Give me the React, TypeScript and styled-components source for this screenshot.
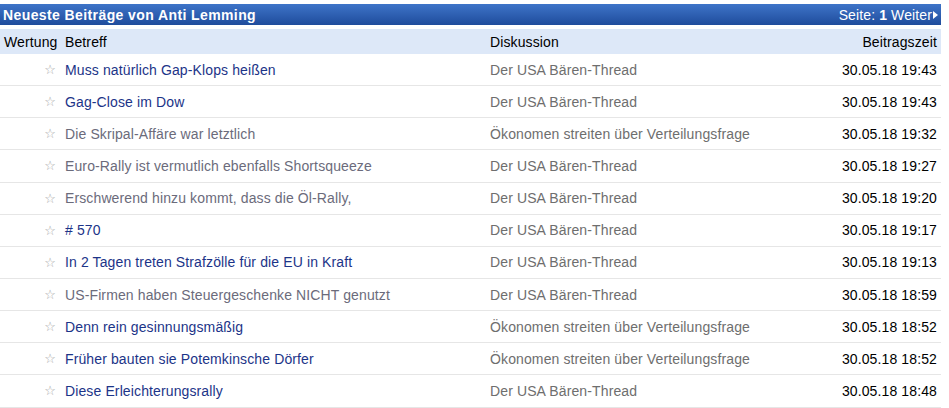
import * as React from 'react';
import styled, { createGlobalStyle } from 'styled-components';

const GlobalStyle = createGlobalStyle`
  body {
    margin: 0;
    background: #ffffff;
    font-family: Arial, "Liberation Sans", sans-serif;
  }
`;

interface Post {
  title: string;
  visited: boolean;
  thread: string;
  date: string;
}

const USA = 'Der USA Bären-Thread';
const OEK = 'Ökonomen streiten über Verteilungsfrage';

const posts: Post[] = [
  { title: 'Muss natürlich Gap-Klops heißen', visited: false, thread: USA, date: '30.05.18 19:43' },
  { title: 'Gag-Close im Dow', visited: false, thread: USA, date: '30.05.18 19:43' },
  { title: 'Die Skripal-Affäre war letztlich', visited: true, thread: OEK, date: '30.05.18 19:32' },
  { title: 'Euro-Rally ist vermutlich ebenfalls Shortsqueeze', visited: true, thread: USA, date: '30.05.18 19:27' },
  { title: 'Erschwerend hinzu kommt, dass die Öl-Rally,', visited: true, thread: USA, date: '30.05.18 19:20' },
  { title: '# 570', visited: false, thread: USA, date: '30.05.18 19:17' },
  { title: 'In 2 Tagen treten Strafzölle für die EU in Kraft', visited: false, thread: USA, date: '30.05.18 19:13' },
  { title: 'US-Firmen haben Steuergeschenke NICHT genutzt', visited: true, thread: USA, date: '30.05.18 18:59' },
  { title: 'Denn rein gesinnungsmäßig', visited: false, thread: OEK, date: '30.05.18 18:52' },
  { title: 'Früher bauten sie Potemkinsche Dörfer', visited: false, thread: OEK, date: '30.05.18 18:52' },
  { title: 'Diese Erleichterungsrally', visited: false, thread: USA, date: '30.05.18 18:48' },
];

const Wrapper = styled.div`
  width: 941px;
  padding-top: 4px;
  font-size: 14px;
  letter-spacing: 0.12px;
`;

const TitleBar = styled.div`
  height: 21px;
  display: flex;
  align-items: center;
  justify-content: space-between;
  padding: 0 3px 0 3px;
  background: linear-gradient(#3e74c8, #1f4c9c);
  color: #ffffff;
`;

const Title = styled.span`
  font-weight: bold;
  font-size: 14px;
  letter-spacing: 0.4px;
`;

const Pager = styled.span`
  display: flex;
  align-items: center;
  gap: 4px;
`;

const PagerArrow = styled.span`
  width: 0;
  height: 0;
  margin-left: -3px;
  border-top: 4px solid transparent;
  border-bottom: 4px solid transparent;
  border-left: 5px solid #ffffff;
`;

const Grid = styled.div`
  margin-top: 4px;
  display: grid;
  grid-template-columns: 61px 425px 1fr auto;
`;

const HeadCell = styled.div<{ $right?: boolean }>`
  height: 25px;
  display: flex;
  align-items: center;
  justify-content: ${(p) => (p.$right ? 'flex-end' : 'flex-start')};
  padding: 0 4px;
  background: #dde8f8;
  color: #000000;
`;

const Cell = styled.div<{ $right?: boolean }>`
  height: 31.15px;
  display: flex;
  align-items: center;
  justify-content: ${(p) => (p.$right ? 'flex-end' : 'flex-start')};
  padding: 0 4px;
  border-bottom: 1px solid #e6e6e6;
  white-space: nowrap;
`;

const Star = styled.span`
  margin-left: auto;
  margin-right: 1px;
  color: #a8a8a8;
  font-size: 13px;
  font-family: "DejaVu Sans", sans-serif;
`;

const Subject = styled.a<{ $visited: boolean }>`
  color: ${(p) => (p.$visited ? '#6b6b7b' : '#1c3488')};
  text-decoration: none;
`;

const Thread = styled.a`
  color: #6e6e6e;
  text-decoration: none;
`;

const DateText = styled.span`
  color: #000000;
`;

export default function App() {
  return (
    <Wrapper>
      <GlobalStyle />
      <TitleBar>
        <Title>Neueste Beiträge von Anti Lemming</Title>
        <Pager>
          <span>
            Seite: <b>1</b>
          </span>
          <span>Weiter</span>
          <PagerArrow />
        </Pager>
      </TitleBar>
      <Grid>
        <HeadCell>Wertung</HeadCell>
        <HeadCell>Betreff</HeadCell>
        <HeadCell>Diskussion</HeadCell>
        <HeadCell $right>Beitragszeit</HeadCell>
        {posts.map((post, i) => (
          <React.Fragment key={i}>
            <Cell>
              <Star>☆</Star>
            </Cell>
            <Cell>
              <Subject $visited={post.visited}>{post.title}</Subject>
            </Cell>
            <Cell>
              <Thread>{post.thread}</Thread>
            </Cell>
            <Cell $right>
              <DateText>{post.date}</DateText>
            </Cell>
          </React.Fragment>
        ))}
      </Grid>
    </Wrapper>
  );
}
